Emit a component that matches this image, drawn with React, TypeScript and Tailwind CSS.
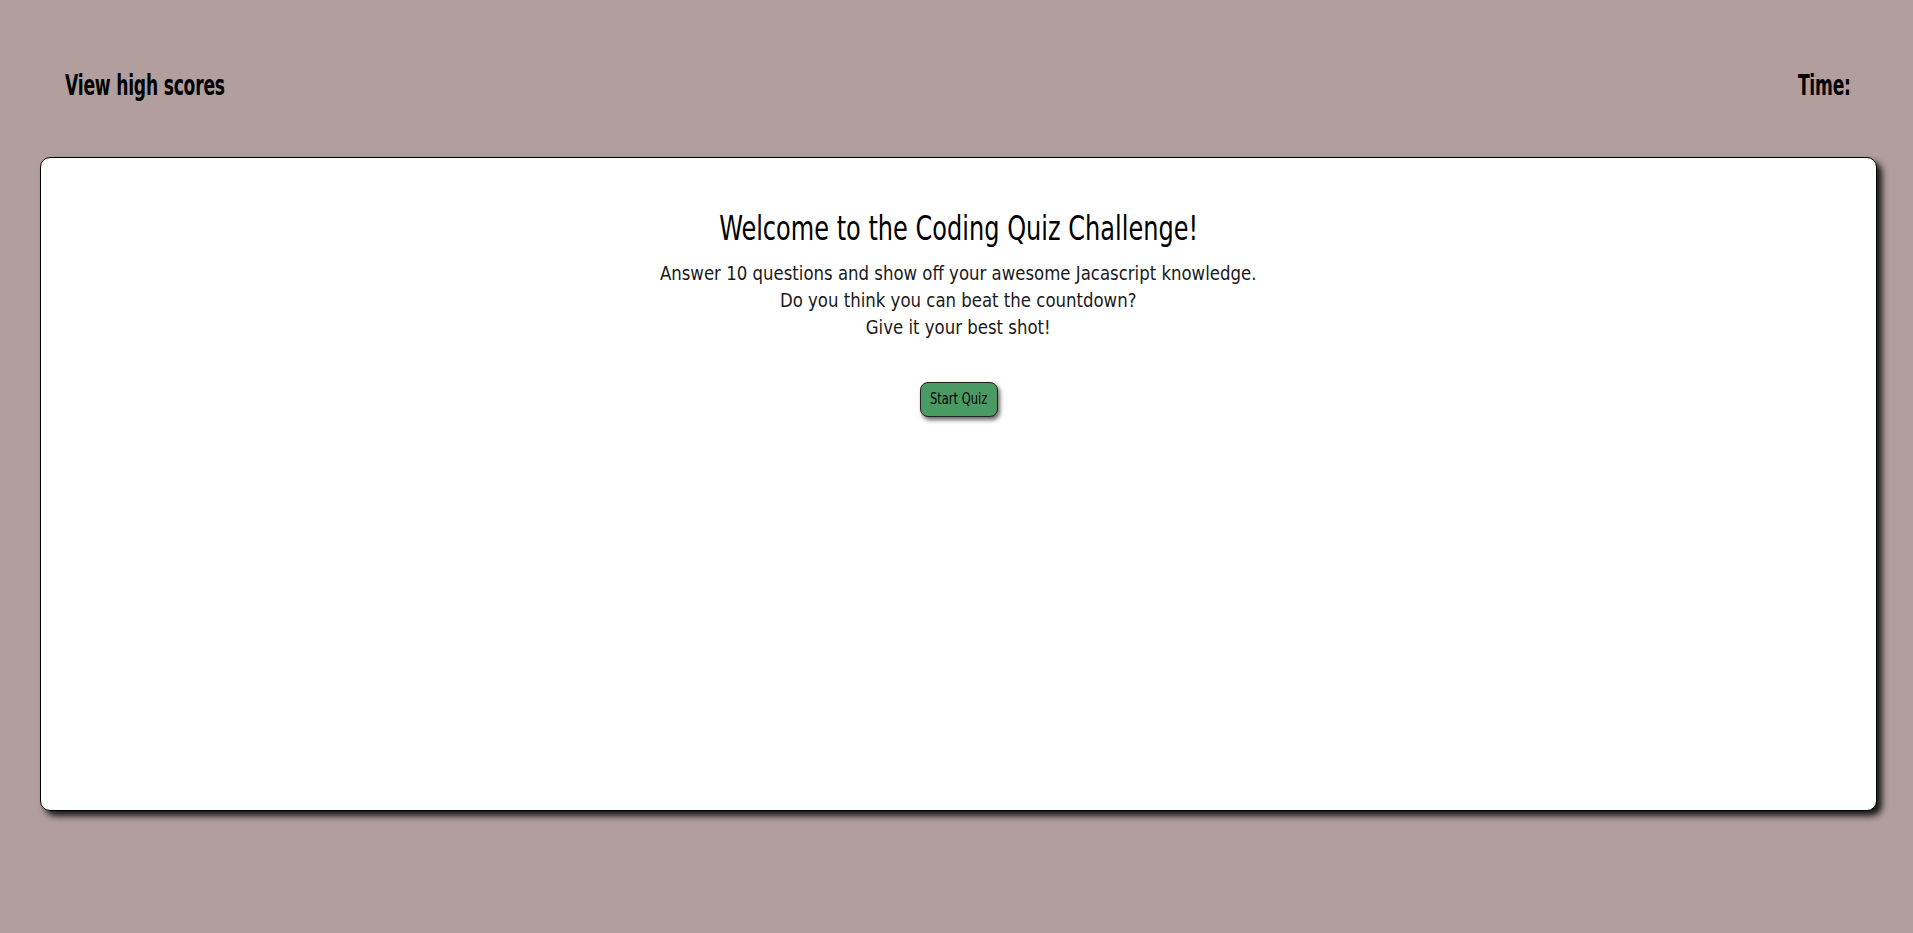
const App = () => (
  <div className="min-h-[933px] bg-[#b19e9d] font-['DejaVu_Sans_Condensed','DejaVu_Sans',sans-serif]">
    <header className="flex h-[157px] items-center justify-between px-[65px] pt-[15px]">
      <a className="origin-left scale-x-[0.68] text-[28px] font-bold tracking-[-0.3px] text-black">View high scores</a>
      <p className="mr-[-3px] origin-right scale-x-[0.68] text-[28px] font-bold tracking-[-0.3px] text-black">Time:</p>
    </header>
    <main className="ml-[40px] mr-[36px] h-[654px] rounded-[10px] border border-black bg-white shadow-[5px_5px_6px_rgba(0,0,0,0.85)]">
      <div className="flex flex-col items-center pt-[50px] text-center">
        <h1 className="scale-x-[0.81] text-[33px] leading-[42px] text-black">Welcome to the Coding Quiz Challenge!</h1>
        <p className="mt-[10px] scale-x-[0.92] text-[20px] leading-[27px] text-[#1a1a1a]">
          Answer 10 questions and show off your awesome Jacascript knowledge.
          <br />
          Do you think you can beat the countdown?
          <br />
          Give it your best shot!
        </p>
        <button className="mt-[41px] h-[35px] w-[78px] rounded-[8px] border border-[#222] bg-[#4a9a64] text-[15px] text-black shadow-[2px_3px_4px_rgba(0,0,0,0.6)]">
          <span className="inline-block scale-x-[0.85]">Start Quiz</span>
        </button>
      </div>
    </main>
  </div>
);

export default App;
